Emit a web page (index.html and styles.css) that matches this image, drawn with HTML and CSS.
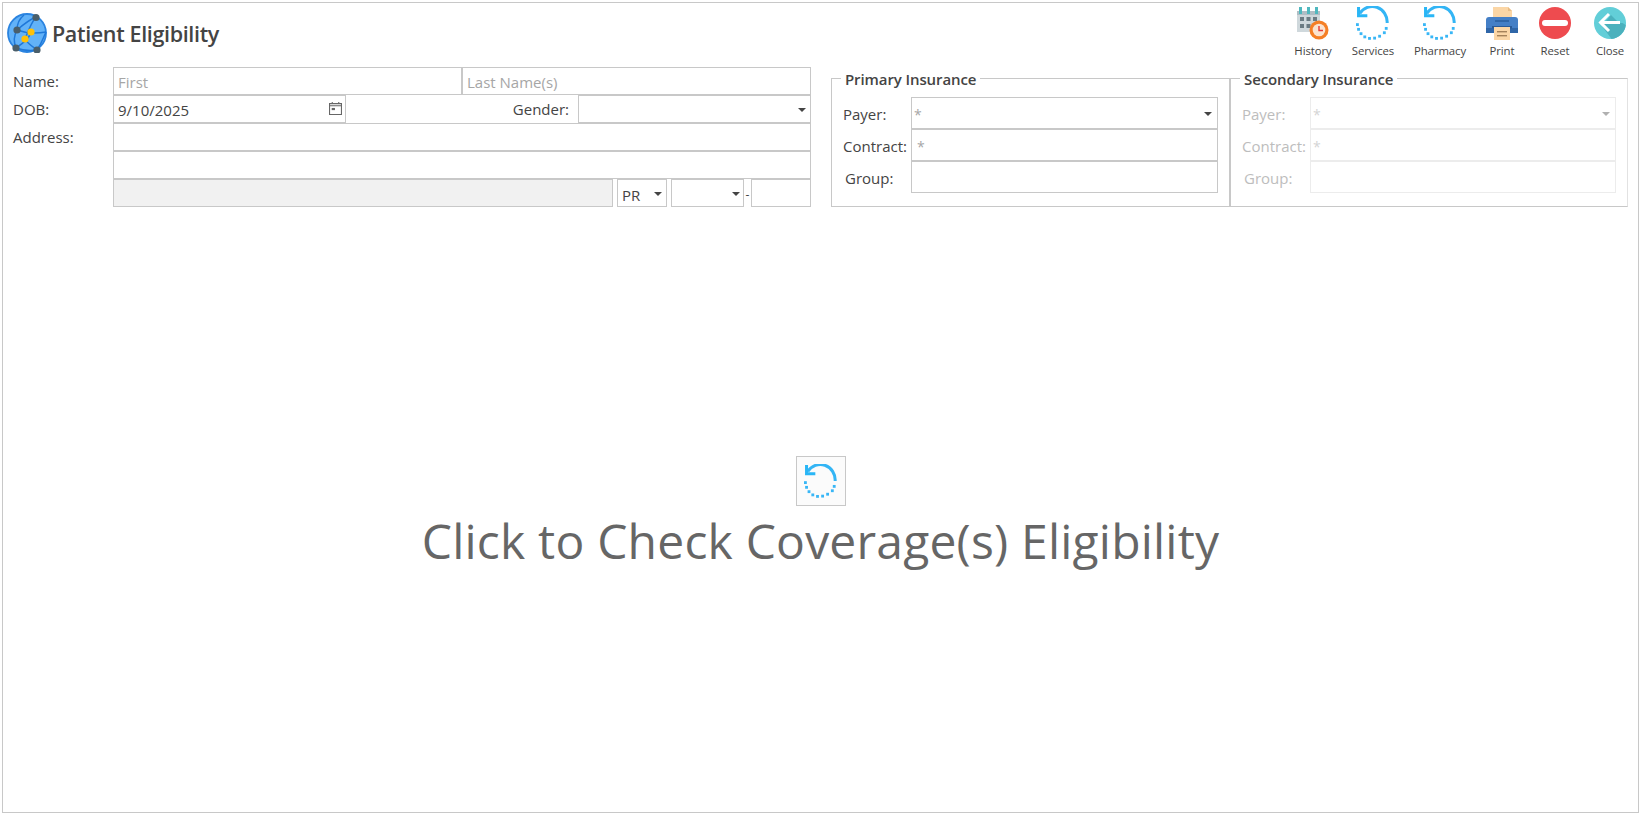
FILE: index.html
```html
<!DOCTYPE html>
<html lang="en">
<head>
<meta charset="utf-8">
<title>Patient Eligibility</title>
<link rel="stylesheet" href="styles.css">
</head>
<body>
<svg class="defs" width="0" height="0" aria-hidden="true">
  <symbol id="refresh" viewBox="-1 0 36 36">
    <path d="M3 8A15.8 16.5 0 0 1 32 18" fill="none" stroke="#33b5f5" stroke-width="3.2"/>
    <path d="M1.7 1V10.3H11" fill="none" stroke="#29b6f6" stroke-width="3.2"/>
    <g fill="#38b6f6">
      <rect x="29.5" y="22.2" width="3" height="3"/><rect x="27.5" y="26.8" width="3" height="3"/>
      <rect x="22.5" y="30.5" width="3" height="3"/><rect x="17.2" y="32.5" width="3" height="3"/>
      <rect x="11.8" y="32.8" width="3" height="3"/><rect x="6.8" y="31.2" width="3" height="3"/>
      <rect x="2.8" y="27.8" width="3" height="3"/><rect x=".2" y="23.2" width="3" height="3"/>
      <rect x="-1" y="18.2" width="3" height="3"/>
    </g>
  </symbol>
</svg>
<div class="window">
  <header class="header">
    <div class="title-wrap">
      <svg class="logo" viewBox="0 0 40 40">
        <circle cx="20" cy="20" r="19" fill="#62b2f8" stroke="#2b84e0" stroke-width="1.8"/>
        <g fill="none" stroke="#1f78d8" stroke-width="1.5">
          <path d="M10 17C18 10 24 6 29 4"/><path d="M10 17C18 20 28 21 39 19"/>
          <path d="M10 17C6 24 7 30 9 35"/><path d="M9 35C16 30 22 26 24 19"/>
          <path d="M9 35C17 38 23 38 30 37"/><path d="M29 4C24 10 22 16 18 26C20 30 26 34 30 37"/>
          <path d="M30 37C35 30 36 25 39 19"/><path d="M10 17C10 10 12 6 17 2"/>
        </g>
        <circle cx="29" cy="4.5" r="3.6" fill="#4a5f6b"/><circle cx="10" cy="17" r="3.6" fill="#4a5f6b"/>
        <circle cx="9" cy="35" r="3.6" fill="#4a5f6b"/><circle cx="30" cy="37" r="3.6" fill="#4a5f6b"/>
        <circle cx="24" cy="19" r="3.6" fill="#ffc107"/><circle cx="18" cy="26" r="3.6" fill="#ffc107"/>
      </svg>
      <h1 class="title">Patient Eligibility</h1>
    </div>
    <nav class="tools">
      <div class="tool tool-history">
        <svg class="tool-icon" viewBox="0 0 34 34">
          <rect x="1" y="5" width="23" height="21" fill="#cfd8dc"/>
          <rect x="1" y="5" width="23" height="4" fill="#b0bec5"/>
          <g fill="#4fb8bf"><rect x="3" y="1" width="3" height="7"/><rect x="11" y="1" width="3" height="7"/><rect x="19" y="1" width="3" height="7"/></g>
          <g fill="#6b7b83"><rect x="4" y="11" width="4" height="4"/><rect x="10.5" y="11" width="4" height="4"/><rect x="17" y="11" width="4" height="4"/><rect x="4" y="18" width="4" height="4"/><rect x="10.5" y="18" width="4" height="4"/></g>
          <circle cx="23" cy="24" r="9.5" fill="#f57f25"/><circle cx="23" cy="24" r="6.3" fill="#fbe3cf"/>
          <path d="M23 20V24.5H27" fill="none" stroke="#e53935" stroke-width="1.4"/>
        </svg>
        <span>History</span>
      </div>
      <div class="tool tool-services"><svg class="tool-icon"><use href="#refresh"/></svg><span>Services</span></div>
      <div class="tool tool-pharmacy"><svg class="tool-icon"><use href="#refresh"/></svg><span>Pharmacy</span></div>
      <div class="tool tool-print">
        <svg class="tool-icon" viewBox="0 0 34 34">
          <path d="M8 1H23L27 5V14H8Z" fill="#fbd6a6"/><path d="M23 1V5H27Z" fill="#e9bd86"/>
          <path d="M4 11H30Q33 11 33 14V27H1V14Q1 11 4 11Z" fill="#447fc6"/>
          <rect x="1" y="22" width="32" height="5" fill="#2f66a8"/>
          <rect x="10" y="14" width="14" height="2" fill="#2f66a8"/>
          <rect x="7" y="20" width="20" height="2.5" fill="#2a5a96"/>
          <rect x="9" y="21" width="16" height="13" fill="#fbd6a6"/>
          <g fill="#a5825a"><rect x="12" y="25" width="10" height="1.4"/><rect x="12" y="29" width="10" height="1.4"/></g>
        </svg>
        <span>Print</span>
      </div>
      <div class="tool tool-reset">
        <svg class="tool-icon" viewBox="0 0 34 34">
          <circle cx="17" cy="17" r="16" fill="#ee4b4f"/>
          <rect x="4" y="14" width="26" height="6" rx="3" fill="#fff"/>
        </svg>
        <span>Reset</span>
      </div>
      <div class="tool tool-close">
        <svg class="tool-icon" viewBox="0 0 34 34">
          <circle cx="17" cy="17" r="16" fill="#62ced8"/>
          <path d="M18 9L26 17H29.5L32.8 19A16 16 0 0 1 18.5 33L9 20Z" fill="#4bb1bd"/>
          <path d="M16 8L7.5 16.5L16 25M8 16.5H27" fill="none" stroke="#fff" stroke-width="3"/>
        </svg>
        <span>Close</span>
      </div>
    </nav>
  </header>

  <section class="form-area">
    <div class="patient">
      <div class="row">
        <label class="row-label">Name:</label>
        <div class="row-fields">
          <input class="field field-first" placeholder="First">
          <input class="field field-grow" placeholder="Last Name(s)">
        </div>
      </div>
      <div class="row">
        <label class="row-label">DOB:</label>
        <div class="row-fields">
          <div class="field field-dob">
            <span>9/10/2025</span>
            <svg class="cal" viewBox="0 0 12 12"><path d="M.5 1.5H11.5V11.5H.5ZM.5 3.5H11.5M3 0V2M9 0V2" fill="none" stroke="#666"/><rect x="2.5" y="5.5" width="3" height="2" fill="#666"/></svg>
          </div>
          <label class="gender-label">Gender:</label>
          <div class="field field-gender"><i class="caret"></i></div>
        </div>
      </div>
      <div class="row">
        <label class="row-label">Address:</label>
        <div class="row-fields"><input class="field field-grow"></div>
      </div>
      <div class="row">
        <span class="row-label"></span>
        <div class="row-fields"><input class="field field-grow"></div>
      </div>
      <div class="row">
        <span class="row-label"></span>
        <div class="row-fields">
          <div class="field field-city"></div>
          <div class="field field-state"><span>PR</span><i class="caret"></i></div>
          <div class="field field-zip"><i class="caret"></i></div>
          <span class="dash">-</span>
          <div class="field field-zip4"></div>
        </div>
      </div>
    </div>

    <div class="insurance">
      <fieldset class="box box-primary">
        <legend>Primary Insurance</legend>
        <div class="ins-row"><label>Payer:</label><div class="field ins-field"><span class="star">*</span><i class="caret"></i></div></div>
        <div class="ins-row"><label>Contract:</label><div class="field ins-field"><span class="star star-in">*</span></div></div>
        <div class="ins-row"><label class="indent">Group:</label><div class="field ins-field"></div></div>
      </fieldset>
      <fieldset class="box box-secondary">
        <legend>Secondary Insurance</legend>
        <div class="ins-row"><label>Payer:</label><div class="field ins-field"><span class="star">*</span><i class="caret"></i></div></div>
        <div class="ins-row"><label>Contract:</label><div class="field ins-field"><span class="star">*</span></div></div>
        <div class="ins-row"><label class="indent">Group:</label><div class="field ins-field"></div></div>
      </fieldset>
    </div>
  </section>

  <main class="check">
    <button class="check-btn" type="button"><svg class="check-icon"><use href="#refresh"/></svg></button>
    <div class="check-text">Click to Check Coverage(s) Eligibility</div>
  </main>
</div>
</body>
</html>
```
FILE: styles.css
```css
* { box-sizing: border-box; }
html, body { height: 100%; }
body {
  margin: 0;
  padding: 2px 6px 3px 2px;
  background: #fff;
  color: #444;
  font-family: "Open Sans", "Noto Sans", sans-serif;
  font-size: 15px;
}
.defs { position: absolute; }
.window {
  height: 100%;
  border: 1px solid #c8c8c8;
  display: flex;
  flex-direction: column;
}
.header {
  height: 64px;
  display: flex;
  justify-content: space-between;
  align-items: flex-start;
}
.title-wrap {
  display: flex;
  align-items: center;
  padding: 10px 0 0 4px;
}
.logo { width: 40px; height: 40px; display: block; }
.title {
  margin: 0 0 0 5px;
  font-size: 21.5px;
  font-weight: 600;
  letter-spacing: -.35px;
  color: #444;
}
.tools { display: flex; padding-top: 3px; }
.tool {
  display: flex;
  flex-direction: column;
  align-items: center;
  font-size: 11.4px;
  letter-spacing: -.1px;
  color: #444;
}
.tool-icon { width: 34px; height: 34px; display: block; margin-bottom: 3px; }
.tool-history { width: 58px; }
.tool-services { width: 62px; }
.tool-pharmacy { width: 72px; }
.tool-print { width: 52px; }
.tool-reset { width: 54px; }
.tool-close { width: 56px; }

.form-area { display: flex; align-items: flex-start; }
.patient { width: 808px; }
.row { display: flex; height: 28px; }
.row-label { width: 100px; margin-left: 10px; line-height: 29px; flex: none; }
.row-fields { flex: 1; display: flex; align-items: stretch; min-width: 0; }
.field {
  position: relative;
  display: block;
  height: 28px;
  border: 1px solid #c8c8c8;
  background: #fff;
  border-radius: 0;
  margin: 0;
  padding: 2px 4px 0;
  font: inherit;
  color: #444;
  outline: none;
  line-height: 26px;
}
.field::placeholder { color: #a6a6a6; opacity: 1; }
.field-first { width: 349px; flex: none; }
.field-grow { flex: 1; min-width: 0; }
.field-dob { width: 233px; flex: none; display: flex; justify-content: space-between; align-items: center; }
.cal { width: 13px; height: 13px; margin-right: -1px; margin-top: -3px; }
.gender-label { flex: 1; text-align: right; padding-right: 9px; line-height: 29px; }
.field-gender { width: 233px; flex: none; }
.field-city { width: 500px; flex: none; background: #f1f1f1; }
.field-state { width: 50px; flex: none; margin-left: 4px; }
.field-zip { width: 73px; flex: none; margin-left: 4px; }
.dash { width: 7px; flex: none; text-align: center; line-height: 32px; font-size: 12px; }
.field-zip4 { flex: 1; }
.caret {
  position: absolute;
  right: 4px;
  top: 12px;
  width: 0;
  height: 0;
  border-left: 4px solid transparent;
  border-right: 4px solid transparent;
  border-top: 4px solid #444;
}
.field-zip .caret { right: 3px; }

.insurance { display: flex; margin-left: 20px; }
.box {
  margin: 0;
  padding: 8px 11px 13px 11px;
  border: 1px solid #c8c8c8;
  min-width: 0;
}
.box-primary { width: 399px; }
.box-secondary { width: 398px; border-right-color: #e2e2e2; }
.box legend {
  margin-left: -2px;
  padding: 2px 4px 0;
  font-size: 15px;
  font-weight: 600;
  line-height: 20px;
  letter-spacing: -.1px;
  color: #444;
}
.ins-row { display: flex; height: 32px; }
.ins-row label { width: 68px; flex: none; line-height: 35px; white-space: nowrap; }
.ins-row .indent { padding-left: 2px; }
.ins-field { flex: 1; height: 32px; line-height: 32px; padding: 0 2px; }
.star { color: #a6a6a6; font-size: 14px; }
.star-in { padding-left: 3px; }
.ins-field .caret { top: 14px; right: 5px; }
.box-secondary .ins-row label { color: #bdbdbd; }
.box-secondary .field { border-color: #ececec; }
.box-secondary .star { color: #d4d4d4; }
.box-secondary .caret { border-top-color: #b0b0b0; }

.check {
  flex: 1;
  display: flex;
  flex-direction: column;
  align-items: center;
  justify-content: center;
  padding-top: 12px;
}
.check-btn {
  width: 50px;
  height: 50px;
  border: 1px solid #c8c8c8;
  background: #fbfbfb;
  padding: 0;
  display: flex;
  align-items: center;
  justify-content: center;
}
.check-icon { width: 34px; height: 34px; display: block; }
.check-text {
  font-size: 48px;
  line-height: 70px;
  color: #666;
  letter-spacing: .2px;
  white-space: nowrap;
}
```
